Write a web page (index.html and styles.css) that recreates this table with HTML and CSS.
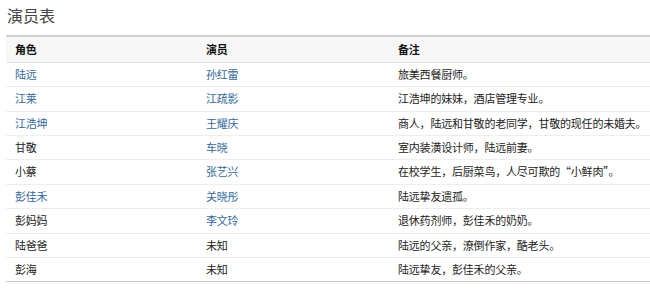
FILE: index.html
```html
<!DOCTYPE html>
<html lang="zh">
<head>
<meta charset="utf-8">
<link rel="stylesheet" href="styles.css">
</head>
<body>
<h2 class="title">演员表</h2>
<table class="cast">
  <colgroup><col class="c1"><col class="c2"><col></colgroup>
  <thead>
    <tr><th>角色</th><th>演员</th><th>备注</th></tr>
  </thead>
  <tbody>
    <tr><td><a>陆远</a></td><td><a>孙红雷</a></td><td>旅美西餐厨师。</td></tr>
    <tr><td><a>江莱</a></td><td><a>江疏影</a></td><td>江浩坤的妹妹，酒店管理专业。</td></tr>
    <tr><td><a>江浩坤</a></td><td><a>王耀庆</a></td><td>商人，陆远和甘敬的老同学，甘敬的现任的未婚夫。</td></tr>
    <tr><td>甘敬</td><td><a>车晓</a></td><td>室内装潢设计师，陆远前妻。</td></tr>
    <tr><td>小蔡</td><td><a>张艺兴</a></td><td>在校学生，后厨菜鸟，人尽可欺的“小鲜肉”。</td></tr>
    <tr><td><a>彭佳禾</a></td><td><a>关晓彤</a></td><td>陆远挚友遗孤。</td></tr>
    <tr><td>彭妈妈</td><td><a>李文玲</a></td><td>退休药剂师，彭佳禾的奶奶。</td></tr>
    <tr><td>陆爸爸</td><td>未知</td><td>陆远的父亲，潦倒作家，酷老头。</td></tr>
    <tr><td>彭海</td><td>未知</td><td>陆远挚友，彭佳禾的父亲。</td></tr>
  </tbody>
</table>
</body>
</html>
```
FILE: styles.css
```css
html, body {
  margin: 0;
  padding: 0;
  background: #fff;
}
body {
  padding: 0 0 0 6px;
  font-family: "Noto Sans CJK SC", "Noto Sans", sans-serif;
  color: #222;
}
.title {
  margin: 4px 0 0 1px;
  font-size: 16px;
  line-height: 22px;
  font-weight: normal;
  color: #444;
  height: 31px;
}
.cast {
  width: 644px;
  border-collapse: collapse;
  table-layout: fixed;
  font-size: 11px;
  letter-spacing: -0.2px;
  border-top: 2px solid #d0d0d0;
  border-bottom: 1px solid #c8c8c8;
}
.c1 { width: 191px; }
.c2 { width: 192px; }
.cast th {
  text-align: left;
  font-weight: bold;
  background: #f7f7f7;
  padding: 3px 9px;
  line-height: 18.7px;
  height: 18.7px;
  border-bottom: 1px solid #e2e2e2;
  color: #111;
}
.cast td {
  padding: 3px 9px;
  line-height: 17.4px;
  border-top: 1px solid #eeeeee;
  white-space: nowrap;
}
.cast a {
  color: #33679c;
  text-decoration: none;
}
```
